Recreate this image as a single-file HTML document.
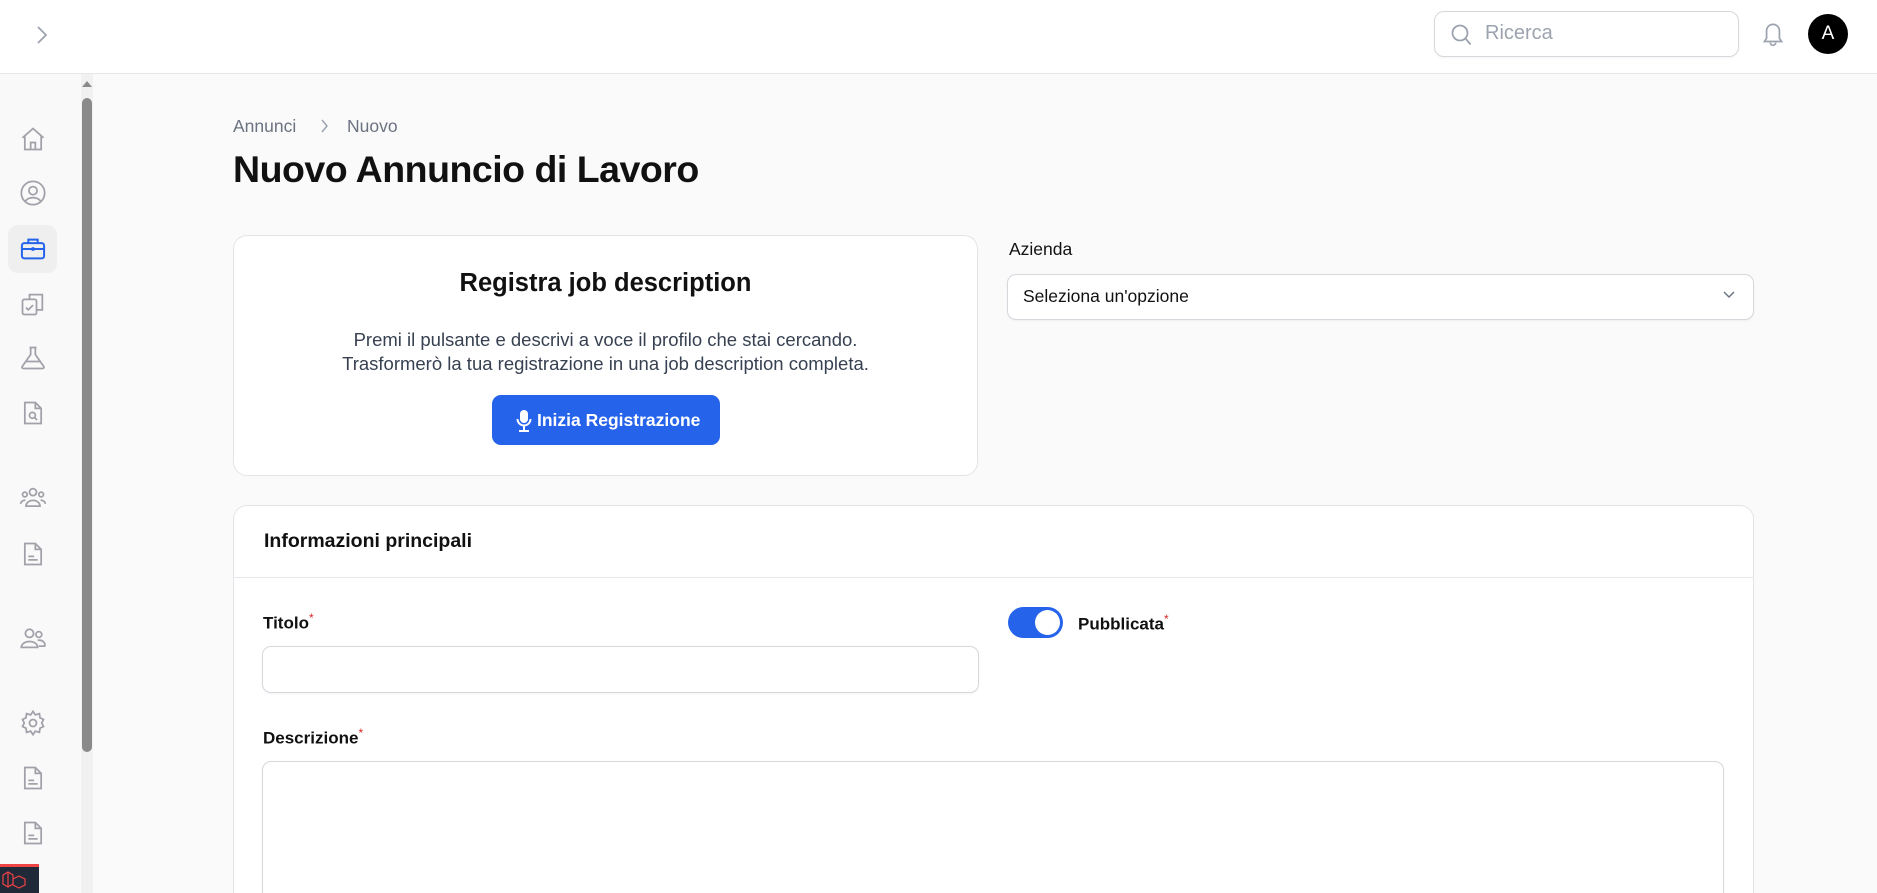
<!DOCTYPE html>
<html style="overflow:hidden;height:893px"><head><meta charset="utf-8"><style>
*{box-sizing:border-box;margin:0;padding:0}
html,body{overflow:hidden}
body{width:1877px;height:893px;background:#fafafa;font-family:"Liberation Sans",sans-serif;color:#111;position:relative}
.top{position:absolute;left:0;top:0;width:1877px;height:74px;background:#fff;border-bottom:1px solid #e5e7eb}
.side{position:absolute;left:0;top:74px;width:80px;height:819px;background:#f9f9f9}
.ic{position:absolute;left:19px;width:28px;height:28px}
.ab{position:absolute}
.card{position:absolute;background:#fff;border:1px solid #e3e4e8;border-radius:14px}
.inp{position:absolute;background:#fff;border:1px solid #d6d8dd;border-radius:9px;box-shadow:0 1px 2px rgba(0,0,0,.05)}
.lbl{position:absolute;font-size:17px;font-weight:bold;color:#111}
.lbl sup{color:#dc2626;font-size:12px;font-weight:normal}
</style></head><body>
<div class="top">
<svg class="ab" style="left:34px;top:24px" width="16" height="22" viewBox="0 0 16 22"><path d="M4 3l8 8-8 8" fill="none" stroke="#9ca3af" stroke-width="1.8"/></svg>
<div class="inp" style="left:1434px;top:11px;width:305px;height:46px;border-radius:10px"></div>
<svg class="ab" style="left:1450px;top:23px" width="22" height="24" viewBox="0 0 22 24"><circle cx="10" cy="10" r="7.5" fill="none" stroke="#9ca3af" stroke-width="1.8"/><path d="M15.5 15.5l5 6" stroke="#9ca3af" stroke-width="1.8"/></svg>
<div class="ab" style="left:1485px;top:22px;font-size:20px;color:#9ca3af">Ricerca</div>
<svg class="ab" style="left:1760px;top:19px" width="26" height="30" viewBox="0 0 24 28"><path d="M6 18V11a6 6 0 0 1 12 0v7l2 3H4z M9.5 22a2.5 2.5 0 0 0 5 0" fill="none" stroke="#9ca3af" stroke-width="1.6"/></svg>
<div class="ab" style="left:1808px;top:14px;width:40px;height:40px;border-radius:50%;background:#000;color:#fff;font-size:19px;text-align:center;line-height:40px">A</div>
</div>
<div class="side">
<div class="ab" style="left:8px;top:151px;width:49px;height:48px;background:#efefef;border-radius:10px"></div>
<svg class="ic" style="top:51px" viewBox="0 0 24 24" fill="none" stroke="#a1a1aa" stroke-width="1.5"><path d="M3 11l9-8 9 8M5 9v12h14V9M10 21v-6h4v6"/></svg>
<svg class="ic" style="top:105px" viewBox="0 0 24 24" fill="none" stroke="#a1a1aa" stroke-width="1.5"><circle cx="12" cy="12" r="10"/><circle cx="12" cy="10" r="3.5"/><path d="M5.5 19c3-4 10-4 13 0"/></svg>
<svg class="ic" style="top:161px" viewBox="0 0 24 24" fill="none" stroke="#2563eb" stroke-width="1.7"><rect x="2.5" y="7" width="19" height="13" rx="2"/><path d="M8 7V4h8v3M2.5 12h19"/><circle cx="12" cy="12" r=".8" fill="#2563eb"/></svg>
<svg class="ic" style="top:216px" viewBox="0 0 24 24" fill="none" stroke="#a1a1aa" stroke-width="1.5"><rect x="3" y="8" width="12" height="13" rx="1.5"/><path d="M9 8V4h11v13h-5M6 15l2 2 4-4"/></svg>
<svg class="ic" style="top:270px" viewBox="0 0 24 24" fill="none" stroke="#a1a1aa" stroke-width="1.5"><path d="M9 3h6M10 3v6l-7 10c-1 1.5 0 2 1 2h16c1 0 2-.5 1-2l-7-10V3M6 15h12"/></svg>
<svg class="ic" style="top:325px" viewBox="0 0 24 24" fill="none" stroke="#a1a1aa" stroke-width="1.5"><path d="M5 3h9l5 5v13H5zM14 3v5h5"/><circle cx="11.5" cy="14" r="2.5"/><path d="M13.5 16l2 2"/></svg>
<svg class="ic" style="top:410px" viewBox="0 0 24 24" fill="none" stroke="#a1a1aa" stroke-width="1.5"><circle cx="12" cy="7" r="3"/><circle cx="5" cy="9" r="2"/><circle cx="19" cy="9" r="2"/><path d="M6 19a6 5 0 0 1 12 0zM1.5 17a3.5 3 0 0 1 4-3M22.5 17a3.5 3 0 0 0-4-3"/></svg>
<svg class="ic" style="top:466px" viewBox="0 0 24 24" fill="none" stroke="#a1a1aa" stroke-width="1.5"><path d="M5 3h9l5 5v13H5zM14 3v5h5M8 17h8M8 14h5"/></svg>
<svg class="ic" style="top:550px" viewBox="0 0 24 24" fill="none" stroke="#a1a1aa" stroke-width="1.5"><circle cx="9" cy="8" r="3.5"/><circle cx="17" cy="9" r="2.5"/><path d="M2 20a7 5 0 0 1 14 0zM16 14a5 4 0 0 1 6 5h-5"/></svg>
<svg class="ic" style="top:635px" viewBox="0 0 24 24" fill="none" stroke="#a1a1aa" stroke-width="1.5"><circle cx="12" cy="12" r="3"/><path d="M12 2l2 3 3.5-1 .5 3.5 3 1.5-1.5 3 1.5 3-3 1.5-.5 3.5-3.5-1-2 3-2-3-3.5 1-.5-3.5-3-1.5 1.5-3-1.5-3 3-1.5.5-3.5 3.5 1z"/></svg>
<svg class="ic" style="top:690px" viewBox="0 0 24 24" fill="none" stroke="#a1a1aa" stroke-width="1.5"><path d="M5 3h9l5 5v13H5zM14 3v5h5M8 17h8M8 14h5"/></svg>
<svg class="ic" style="top:745px" viewBox="0 0 24 24" fill="none" stroke="#a1a1aa" stroke-width="1.5"><path d="M5 3h9l5 5v13H5zM14 3v5h5M8 17h8M8 14h5"/></svg>
<div class="ab" style="left:81px;top:0;width:12px;height:819px;background:#f1f1f1"></div>
<div class="ab" style="left:82px;top:24px;width:10px;height:654px;background:#8a8a8a;border-radius:5px"></div>
<svg class="ab" style="left:81px;top:6px" width="12" height="8"><path d="M1 7l5-6 5 6z" fill="#8a8a8a"/></svg>
<div class="ab" style="left:0;top:790px;width:39px;height:29px;background:#1f2937;border-top:3px solid #ef4444"></div>
<svg class="ab" style="left:2px;top:797px" width="32" height="18" viewBox="0 0 32 18" fill="none" stroke="#ef4444" stroke-width="1.2"><path d="M1 4l5-3 5 3v9l-5 3-5-3zM11 8l6-3 6 3v6l-6 3-6-3zM6 1v15"/></svg>
</div>
<div class="ab" style="left:233px;top:116px;font-size:17.5px;color:#6b7280">Annunci</div>
<svg class="ab" style="left:320px;top:119px" width="10" height="14"><path d="M2 1l5 6-5 6" fill="none" stroke="#9ca3af" stroke-width="1.5"/></svg>
<div class="ab" style="left:347px;top:116px;font-size:17.5px;color:#6b7280">Nuovo</div>
<div class="ab" style="left:233px;top:148px;font-size:37.5px;font-weight:bold;letter-spacing:-.5px">Nuovo Annuncio di Lavoro</div>
<div class="card" style="left:233px;top:235px;width:745px;height:241px">
<div class="ab" style="left:0;width:100%;top:33px;text-align:center;font-size:25.5px;font-weight:bold">Registra job description</div>
<div class="ab" style="left:0;width:100%;top:92px;text-align:center;font-size:18.5px;color:#374151;line-height:24px">Premi il pulsante e descrivi a voce il profilo che stai cercando.<br>Trasformerò la tua registrazione in una job description completa.</div>
<div class="ab" style="left:258px;top:159px;width:228px;height:50px;background:#2563eb;border-radius:9px;color:#fff;font-size:17.5px;font-weight:bold;line-height:50px;padding-left:45px">Inizia Registrazione</div>
<svg class="ab" style="left:282px;top:173px" width="16" height="24" viewBox="0 0 16 24" fill="#fff"><rect x="4" y="1" width="8" height="13" rx="4"/><path d="M1.5 10a6.5 6.5 0 0 0 13 0M8 17v4M3 22h10" fill="none" stroke="#fff" stroke-width="2"/></svg>
</div>
<div class="ab" style="left:1009px;top:239px;font-size:17.5px;color:#111">Azienda</div>
<div class="inp" style="left:1007px;top:274px;width:747px;height:46px"></div>
<div class="ab" style="left:1023px;top:286px;font-size:17.5px;color:#111">Seleziona un'opzione</div>
<svg class="ab" style="left:1722px;top:290px" width="14" height="10"><path d="M2 2l5 5 5-5" fill="none" stroke="#6b7280" stroke-width="1.5"/></svg>
<div class="card" style="left:233px;top:505px;width:1521px;height:388px;border-bottom:none;border-radius:14px 14px 0 0">
<div class="ab" style="left:30px;top:24px;font-size:19.5px;font-weight:bold">Informazioni principali</div>
<div class="ab" style="left:0;top:71px;width:100%;height:1px;background:#e5e7eb"></div>
</div>
<div class="lbl" style="left:263px;top:611px">Titolo<sup>*</sup></div>
<div class="inp" style="left:262px;top:646px;width:717px;height:47px"></div>
<div class="ab" style="left:1008px;top:607px;width:55px;height:31px;border-radius:16px;background:#2563eb"></div>
<div class="ab" style="left:1035px;top:610px;width:25px;height:25px;border-radius:50%;background:#fff"></div>
<div class="lbl" style="left:1078px;top:612px">Pubblicata<sup>*</sup></div>
<div class="lbl" style="left:263px;top:726px">Descrizione<sup>*</sup></div>
<div class="inp" style="left:262px;top:761px;width:1462px;height:132px;border-bottom:none;border-radius:9px 9px 0 0"></div>
</body></html>
